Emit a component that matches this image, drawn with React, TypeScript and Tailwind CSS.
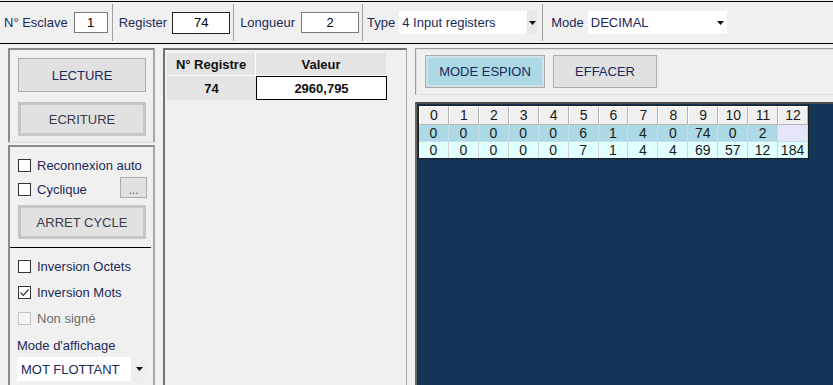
import React from "react";

const ink = "text-[#1a2a5a]";

function Arrow() {
  return (
    <svg width="7" height="4" viewBox="0 0 7 4" className="block">
      <path d="M0 0h7L3.5 4z" fill="#111" />
    </svg>
  );
}

function Check({ label, checked, disabled }: { label: string; checked?: boolean; disabled?: boolean }) {
  return (
    <div className="flex items-center h-full">
      <span
        className={
          "w-[13px] h-[13px] border flex items-center justify-center " +
          (disabled ? "border-[#c4c4c4] bg-[#f4f4f4]" : "border-[#333] bg-white")
        }
      >
        {checked && (
          <svg width="11" height="11" viewBox="0 0 11 11">
            <path d="M1.5 5.5l2.8 2.8L9.5 2.5" stroke="#333" strokeWidth="1.2" fill="none" />
          </svg>
        )}
      </span>
      <span className={"ml-[6px] " + (disabled ? "text-[#6d6d6d]" : ink)}>{label}</span>
    </div>
  );
}

function Btn({ label, strong, tone }: { label: string; strong?: boolean; tone?: string }) {
  return (
    <div
      className={
        "w-[128px] h-[34px] flex items-center justify-center bg-[#e1e1e1] " +
        (strong ? "border-[3px] border-[#c6c6c6] " : "border border-[#adadad] ") +
        (tone ?? ink)
      }
    >
      {label}
    </div>
  );
}

const head = Array.from({ length: 13 }, (_, i) => String(i));
const row1 = ["0", "0", "0", "0", "0", "6", "1", "4", "0", "74", "0", "2", ""];
const row2 = ["0", "0", "0", "0", "0", "7", "1", "4", "4", "69", "57", "12", "184"];

function TopBar() {
  return (
    <div className="mt-px h-[43px] border-t border-b border-black flex items-stretch">
      <div className="flex items-center pl-[4px] pr-[4px] border-r border-[#a0a0a0] my-[2px]">
        <span className={ink}>N° Esclave</span>
        <div className="ml-[6px] w-[34px] h-[21px] bg-white border border-[#7a7a7a] flex items-center justify-center text-black">1</div>
      </div>
      <div className="flex items-center pl-[6px] pr-[3px] border-r border-[#a0a0a0] my-[2px]">
        <span className={ink}>Register</span>
        <div className="ml-[5px] w-[58px] h-[22px] bg-white border border-[#222] flex items-center justify-center text-black">74</div>
      </div>
      <div className="flex items-center pl-[6px] pr-[3px] border-r border-[#a0a0a0] my-[2px]">
        <span className={ink}>Longueur</span>
        <div className="ml-[6px] w-[58px] h-[21px] bg-white border border-[#7a7a7a] flex items-center justify-center text-black">2</div>
      </div>
      <div className="flex items-center pl-[4px] pr-[5px] border-r border-[#a0a0a0] my-[2px]">
        <span className={ink}>Type</span>
        <div className="ml-[4px] w-[138px] h-[23px] bg-white flex items-center">
          <span className={"flex-1 pl-[3px] " + ink}>4 Input registers</span>
          <span className="w-[10px] h-full bg-[#e8e8e8] flex items-center justify-center">
            <Arrow />
          </span>
        </div>
      </div>
      <div className="flex items-center pl-[8px] my-[2px]">
        <span className={ink}>Mode</span>
        <div className="ml-[4px] w-[139px] h-[23px] bg-white flex items-center">
          <span className={"flex-1 pl-[3px] " + ink}>DECIMAL</span>
          <span className="w-[13px] h-full flex items-center justify-center">
            <Arrow />
          </span>
        </div>
      </div>
    </div>
  );
}

function LeftPanel() {
  return (
    <div className="w-[147px] flex flex-col">
      <div className="h-[95px] border-2 border-[#8a8a8a] border-r-[#a6a6a6] border-b-[#e2e2e2] pl-[8px] pt-[8px]">
        <Btn label="LECTURE" />
        <div className="mt-[10px]">
          <Btn label="ECRITURE" strong tone="text-[#3a3a4c]" />
        </div>
      </div>
      <div className="mt-[2px] flex-1 border-t-2 border-l-2 border-r-2 border-[#8a8a8a] border-r-[#a6a6a6] pt-[6px] flex flex-col">
        <div className="h-[24px] ml-[8px]">
          <Check label="Reconnexion auto" />
        </div>
        <div className="h-[24px] ml-[8px] flex items-center justify-between">
          <Check label="Cyclique" />
          <div className="w-[27px] h-[21px] mr-[6px] -mt-[3px] bg-[#e1e1e1] border border-[#adadad] flex items-center justify-center text-[#555] text-[12px] leading-none pt-[4px]">
            ...
          </div>
        </div>
        <div className="mt-[4px] ml-[8px]">
          <Btn label="ARRET CYCLE" strong tone="text-[#3a3a4c]" />
        </div>
        <div className="mt-[8px] h-px w-[141px] bg-black" />
        <div className="mt-[5px] h-[26px] ml-[8px]">
          <Check label="Inversion Octets" />
        </div>
        <div className="h-[26px] ml-[8px]">
          <Check label="Inversion Mots" checked />
        </div>
        <div className="h-[26px] ml-[8px]">
          <Check label="Non signé" disabled />
        </div>
        <div className={"mt-[7px] ml-[7px] leading-[15px] " + ink}>Mode d'affichage</div>
        <div className="mt-[4px] ml-[7px] w-[130px] h-[24px] bg-white flex items-center">
          <span className={"flex-1 pl-[4px] " + ink}>MOT FLOTTANT</span>
          <span className="w-[16px] h-full bg-[#eeeeee] flex items-center justify-center">
            <Arrow />
          </span>
        </div>
      </div>
    </div>
  );
}

function MiddlePanel() {
  return (
    <div className="ml-[8px] w-[244px] border-t-2 border-l-2 border-[#727272] border-r border-r-[#a4a4a4] pl-[2px] pt-[3px]">
      <div className="flex font-bold text-[#111]">
        <div className="w-[89px] h-[23px] bg-[#e4e4e4] border-r border-b border-white flex items-center justify-center">N° Registre</div>
        <div className="w-[130px] h-[23px] bg-[#e4e4e4] border-b border-white flex items-center justify-center">Valeur</div>
      </div>
      <div className="flex font-bold text-[#111]">
        <div className="w-[89px] h-[24px] bg-[#e4e4e4] flex items-center justify-center">74</div>
        <div className="w-[131px] h-[24px] bg-white border border-black flex items-center justify-center">2960,795</div>
      </div>
    </div>
  );
}

function Grid() {
  return (
    <div className="w-[391px] border border-[#1d1d1d] text-[14px] text-[#1a1a1a]">
      <div className="flex h-[19px]">
        {head.map((h) => (
          <div key={h} className="w-[30px] bg-[#f0f0f0] border-t border-l border-white border-r border-b border-r-[#b4b4b4] border-b-[#b4b4b4] flex items-center justify-center">
            {h}
          </div>
        ))}
      </div>
      <div className="flex h-[17px]">
        {row1.map((v, i) => (
          <div
            key={i}
            className={
              "w-[30px] border-r border-b border-[#c6dfe8] flex items-center justify-center " +
              (v === "" ? "bg-[#e6e6fa]" : "bg-[#add8e6]")
            }
          >
            {v}
          </div>
        ))}
      </div>
      <div className="flex h-[16px]">
        {row2.map((v, i) => (
          <div key={i} className="w-[30px] bg-[#e0ffff] border-r border-[#d4d4d4] flex items-center justify-center">
            {v}
          </div>
        ))}
      </div>
    </div>
  );
}

function RightPanel() {
  return (
    <div className="ml-[8px] flex-1 flex flex-col">
      <div className="h-[47px] border-t border-l border-[#9c9c9c] border-b border-b-[#dcdcdc] shadow-[inset_1px_1px_0_#e0e0e0] flex items-start pl-[9px] pt-[6px]">
        <div className={"w-[120px] h-[33px] bg-[#add8e6] border border-[#a9a9a9] shadow-[inset_0_0_0_2px_#cfe3ea] flex items-center justify-center " + ink}>
          MODE ESPION
        </div>
        <div className={"ml-[8px] w-[104px] h-[33px] bg-[#e1e1e1] border border-[#adadad] flex items-center justify-center " + ink}>
          EFFACER
        </div>
      </div>
      <div className="mt-[7px] flex-1 bg-[#113457] border-t-2 border-l-2 border-[#4a4a4a] border-l-[#666] pl-[1px] pt-[1px]">
        <Grid />
      </div>
    </div>
  );
}

export default function App() {
  return (
    <div className="w-[833px] h-[385px] overflow-hidden bg-[#f0f0f0] text-[13px] leading-[15px] font-['Liberation_Sans',Arial,sans-serif]">
      <TopBar />
      <div className="h-[341px] flex pl-[8px] pt-[4px]">
        <LeftPanel />
        <MiddlePanel />
        <RightPanel />
      </div>
    </div>
  );
}
